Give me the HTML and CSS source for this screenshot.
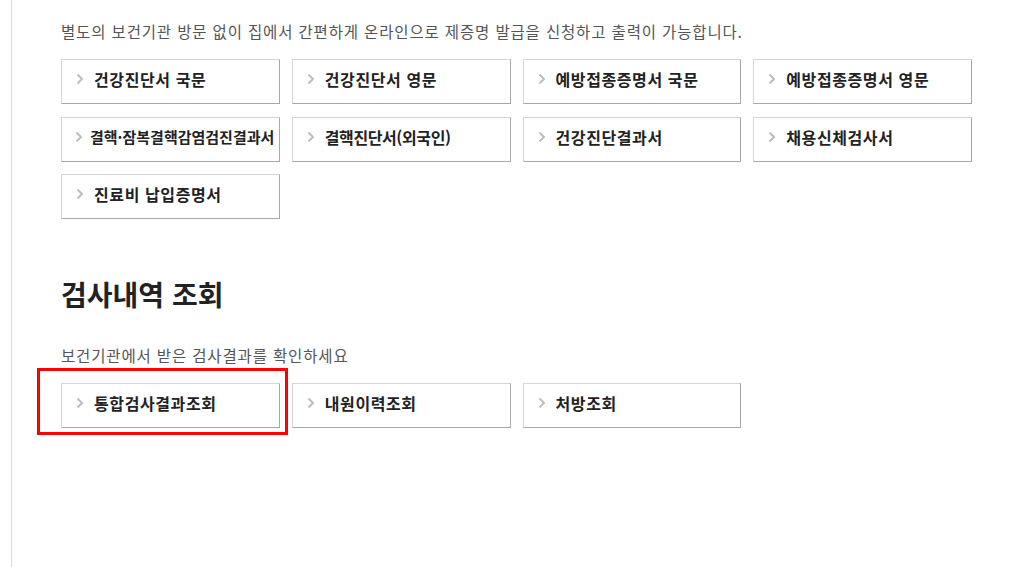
FILE: index.html
```html
<!DOCTYPE html>
<html lang="ko">
<head>
<meta charset="utf-8">
<title>제증명 발급</title>
<link rel="stylesheet" href="styles.css">
</head>
<body>
<div class="page">
  <div class="content">
    <p class="desc">별도의 보건기관 방문 없이 집에서 간편하게 온라인으로 제증명 발급을 신청하고 출력이 가능합니다.</p>
    <div class="btn-grid">
      <a class="btn"><svg class="chev" viewBox="0 0 8 12"><polyline points="1.5,1.5 6,6 1.5,10.5"/></svg><span>건강진단서 국문</span></a>
      <a class="btn"><svg class="chev" viewBox="0 0 8 12"><polyline points="1.5,1.5 6,6 1.5,10.5"/></svg><span>건강진단서 영문</span></a>
      <a class="btn"><svg class="chev" viewBox="0 0 8 12"><polyline points="1.5,1.5 6,6 1.5,10.5"/></svg><span>예방접종증명서 국문</span></a>
      <a class="btn"><svg class="chev" viewBox="0 0 8 12"><polyline points="1.5,1.5 6,6 1.5,10.5"/></svg><span>예방접종증명서 영문</span></a>
      <a class="btn btn-narrow"><svg class="chev" viewBox="0 0 8 12"><polyline points="1.5,1.5 6,6 1.5,10.5"/></svg><span>결핵·잠복결핵감염검진결과서</span></a>
      <a class="btn btn-paren"><svg class="chev" viewBox="0 0 8 12"><polyline points="1.5,1.5 6,6 1.5,10.5"/></svg><span>결핵진단서(외국인)</span></a>
      <a class="btn"><svg class="chev" viewBox="0 0 8 12"><polyline points="1.5,1.5 6,6 1.5,10.5"/></svg><span>건강진단결과서</span></a>
      <a class="btn"><svg class="chev" viewBox="0 0 8 12"><polyline points="1.5,1.5 6,6 1.5,10.5"/></svg><span>채용신체검사서</span></a>
      <a class="btn"><svg class="chev" viewBox="0 0 8 12"><polyline points="1.5,1.5 6,6 1.5,10.5"/></svg><span>진료비 납입증명서</span></a>
    </div>

    <h2 class="section-title">검사내역 조회</h2>
    <p class="desc desc-2">보건기관에서 받은 검사결과를 확인하세요</p>
    <div class="btn-grid btn-grid-2">
      <a class="btn btn-marked"><svg class="chev" viewBox="0 0 8 12"><polyline points="1.5,1.5 6,6 1.5,10.5"/></svg><span>통합검사결과조회</span><i class="mark"></i></a>
      <a class="btn"><svg class="chev" viewBox="0 0 8 12"><polyline points="1.5,1.5 6,6 1.5,10.5"/></svg><span>내원이력조회</span></a>
      <a class="btn"><svg class="chev" viewBox="0 0 8 12"><polyline points="1.5,1.5 6,6 1.5,10.5"/></svg><span>처방조회</span></a>
    </div>
  </div>
</div>
</body>
</html>
```

FILE: styles.css
```css
* { box-sizing: border-box; }
html, body { margin: 0; padding: 0; background: #fff; }
body {
  font-family: "Noto Sans CJK KR", "Noto Sans", sans-serif;
  color: #222;
}
.page {
  height: 567px;
  padding-left: 11px;
}
.content {
  height: 100%;
  border-left: 1px solid #dcdcdc;
  padding: 20px 0 0 49px;
  width: 961px;
}
.desc {
  margin: 0 0 17px;
  font-size: 15.5px;
  line-height: 22px;
  color: #555;
  letter-spacing: 0.85px;
}
.btn-grid {
  display: grid;
  grid-template-columns: repeat(4, 1fr);
  column-gap: 12px;
  row-gap: 12.5px;
}
.btn {
  position: relative;
  display: flex;
  align-items: center;
  height: 45px;
  padding-left: 14px;
  padding-bottom: 5px;
  border: 1px solid;
  border-color: #d6d6d6 #a8a8a8 #a8a8a8 #d6d6d6;
  background: #fff;
  color: #222;
  font-size: 16px;
  font-weight: 700;
  letter-spacing: 0.6px;
  text-decoration: none;
  white-space: nowrap;
}
.btn-narrow { font-size: 15px; letter-spacing: 0; padding-left: 13px; }
.btn-narrow .chev { margin-right: 7px; }
.btn-paren { letter-spacing: -0.4px; }
.chev {
  width: 8px;
  height: 12px;
  margin-right: 10px;
  flex: none;
}
.chev polyline {
  fill: none;
  stroke: #bdbdbd;
  stroke-width: 2;
}
.section-title {
  margin: 57px 0 0;
  font-size: 28px;
  line-height: 36px;
  font-weight: 700;
  color: #222;
}
.desc-2 { margin-top: 32px; margin-bottom: 17px; }
.mark {
  position: absolute;
  left: -25px;
  top: -16px;
  width: 251px;
  height: 67px;
  border: 3px solid #f00;
}
```
